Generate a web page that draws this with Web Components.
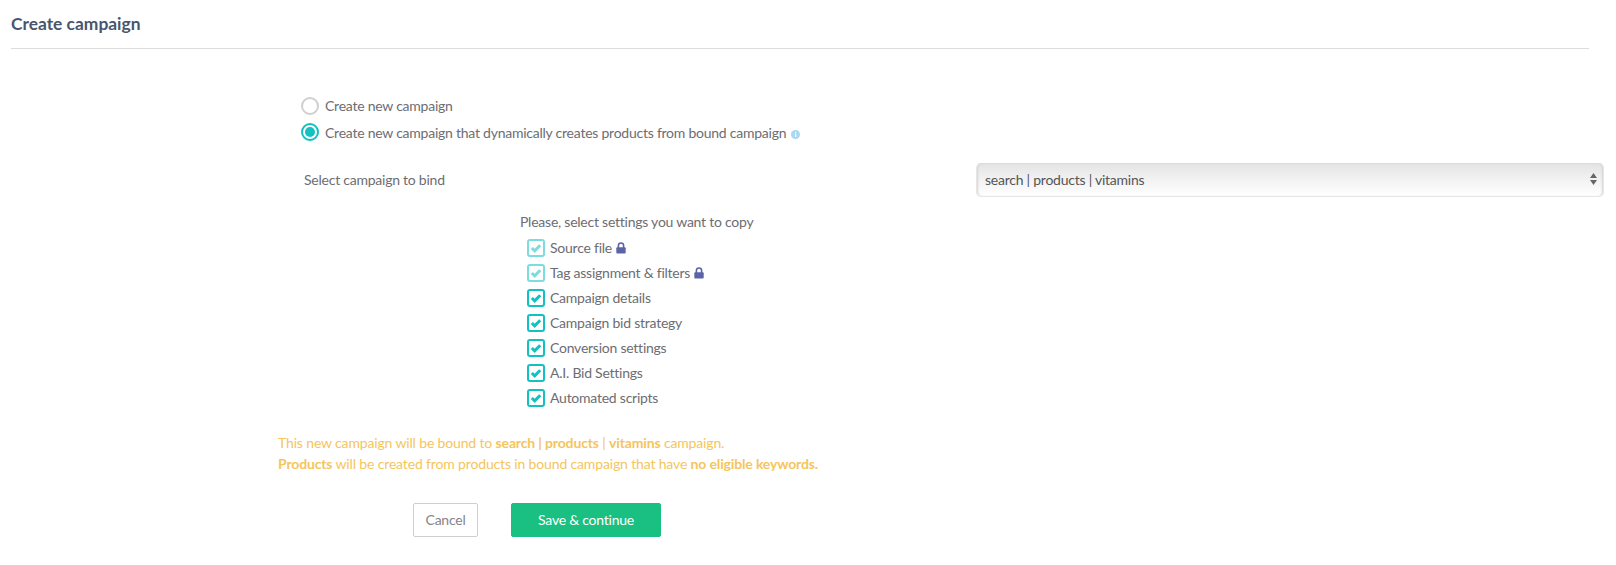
<!DOCTYPE html>
<html><head><meta charset="utf-8"><style>
html,body{margin:0;background:#fff}
body{font-family:"Lato","Liberation Sans",sans-serif;font-size:14px;letter-spacing:-.24px;color:#6d6d72;width:1616px;height:565px;overflow:hidden}
</style></head><body>
<template id="t-radio"><style>
:host{display:flex;align-items:center;gap:6px;height:26px}
.c{width:18px;height:18px;box-sizing:border-box;border-radius:50%;border:2px solid #cfcfcf;display:flex;align-items:center;justify-content:center;flex:none}
:host([checked]) .c{border-color:#13c1c1}
:host([checked]) .c::after{content:"";width:10px;height:10px;border-radius:50%;background:#13c1c1}
.l{position:relative;top:-1px}
:host([checked]) .l{top:0}
</style><span class="c"></span><span class="l"><slot></slot></span></template>
<template id="t-check"><style>
:host{display:flex;align-items:center;gap:5px;height:25px}
.b{width:18px;height:18px;box-sizing:border-box;border:2px solid #13c1c1;border-radius:3px;flex:none;display:flex;align-items:center;justify-content:center}
.b svg{width:12px;height:12px;display:block}
:host([locked]) .b{opacity:.55}
.lock{display:none;margin-left:-1px;width:10px;height:12px}
:host([locked]) .lock{display:block}
</style><span class="b"><svg viewBox="0 0 12 12"><path d="M1.8 6 4.7 8.9 10.2 3.2" fill="none" stroke="#13c1c1" stroke-width="3"/></svg></span><slot></slot><svg class="lock" viewBox="0 0 10 12"><path d="M2.4 6V3.6a2.6 2.6 0 0 1 5.2 0V6" fill="none" stroke="#5c64a8" stroke-width="1.6"/><rect x="0.3" y="5.2" width="9.4" height="6.3" rx="1" fill="#5c64a8"/></svg></template>
<template id="t-select"><style>
:host{display:flex;align-items:center;box-sizing:border-box;height:34px;padding:0 6px 2px 8px;border-radius:5px;border:1px solid #e6e6e6;border-top-color:#dcdcdc;background:linear-gradient(#e4e4e4,#f1f1f1 45%,#fbfbfb 85%,#fff);box-shadow:inset 2px 0 2px -1px #d4d4d4,inset -2px 0 2px -1px #d4d4d4;color:#555;justify-content:space-between}
svg{width:7px;height:12px;display:block}
</style><slot></slot><svg viewBox="0 0 7 12"><path d="M3.5 0 7 5H0zM0 7h7l-3.5 5z" fill="#666"/></svg></template>
<template id="t-button"><style>
:host{display:flex;align-items:center;justify-content:center;box-sizing:border-box;height:34px;padding-bottom:2px;border-radius:2px;border:1px solid #cfcfcf;color:#85858a;width:65px}
:host([primary]){background:#1abf82;border-color:#1abf82;color:#fff;width:150px}
</style><slot></slot></template>
<template id="t-app"><style>
:host{display:block;padding:0 27px 0 11px}
h1{margin:0;height:49px;box-sizing:border-box;padding-top:13px;border-bottom:1px solid #dcdcdf;font-size:17.4px;letter-spacing:0;line-height:22px;font-weight:700;color:#47566e}
.form{padding-left:290px;padding-top:44px}
.row{display:flex;align-items:center;justify-content:space-between;margin:18px -15px 0 3px;height:34px}
.row span{position:relative;top:-1px}
.row x-select{width:628px}
.copy{margin:15px 0 0 219px}
.copy p{margin:0 0 3px;line-height:20px}
.list{margin-left:7px}
.info{display:inline-block;vertical-align:-1px;margin-left:5px;width:9px;height:9px}
.warn{margin:22px 0 0 -23px;color:#f5c55c;line-height:21px;letter-spacing:-.15px}
.warn b{font-weight:700}
.btns{display:flex;gap:33px;margin:29px 0 0 112px}
</style>
<h1>Create campaign</h1>
<div class="form">
<x-radio>Create new campaign</x-radio>
<x-radio checked><span>Create new campaign that dynamically creates products from bound campaign<svg class="info" viewBox="0 0 9 9"><circle cx="4.5" cy="4.5" r="4.5" fill="#a9d8f0"/><rect x="4" y="2" width="1.2" height="1.2" fill="#fff"/><rect x="4" y="3.8" width="1.2" height="3.2" fill="#fff"/></svg></span></x-radio>
<div class="row"><span>Select campaign to bind</span><x-select>search | products | vitamins</x-select></div>
<div class="copy"><p>Please, select settings you want to copy</p>
<div class="list">
<x-check locked>Source file</x-check>
<x-check locked>Tag assignment &amp; filters</x-check>
<x-check>Campaign details</x-check>
<x-check>Campaign bid strategy</x-check>
<x-check>Conversion settings</x-check>
<x-check>A.I. Bid Settings</x-check>
<x-check>Automated scripts</x-check>
</div></div>
<div class="warn">This new campaign will be bound to <b>search | products</b> | <b>vitamins</b> campaign.<br><b>Products</b> will be created from products in bound campaign that have <b>no eligible keywords.</b></div>
<div class="btns"><x-button>Cancel</x-button><x-button primary>Save &amp; continue</x-button></div>
</div></template>
<x-app></x-app>
<script>
for(const [tag,id] of [['x-radio','t-radio'],['x-check','t-check'],['x-select','t-select'],['x-button','t-button'],['x-app','t-app']]){
customElements.define(tag,class extends HTMLElement{constructor(){super();this.attachShadow({mode:'open'}).append(document.getElementById(id).content.cloneNode(true))}})}
</script>
</body></html>
